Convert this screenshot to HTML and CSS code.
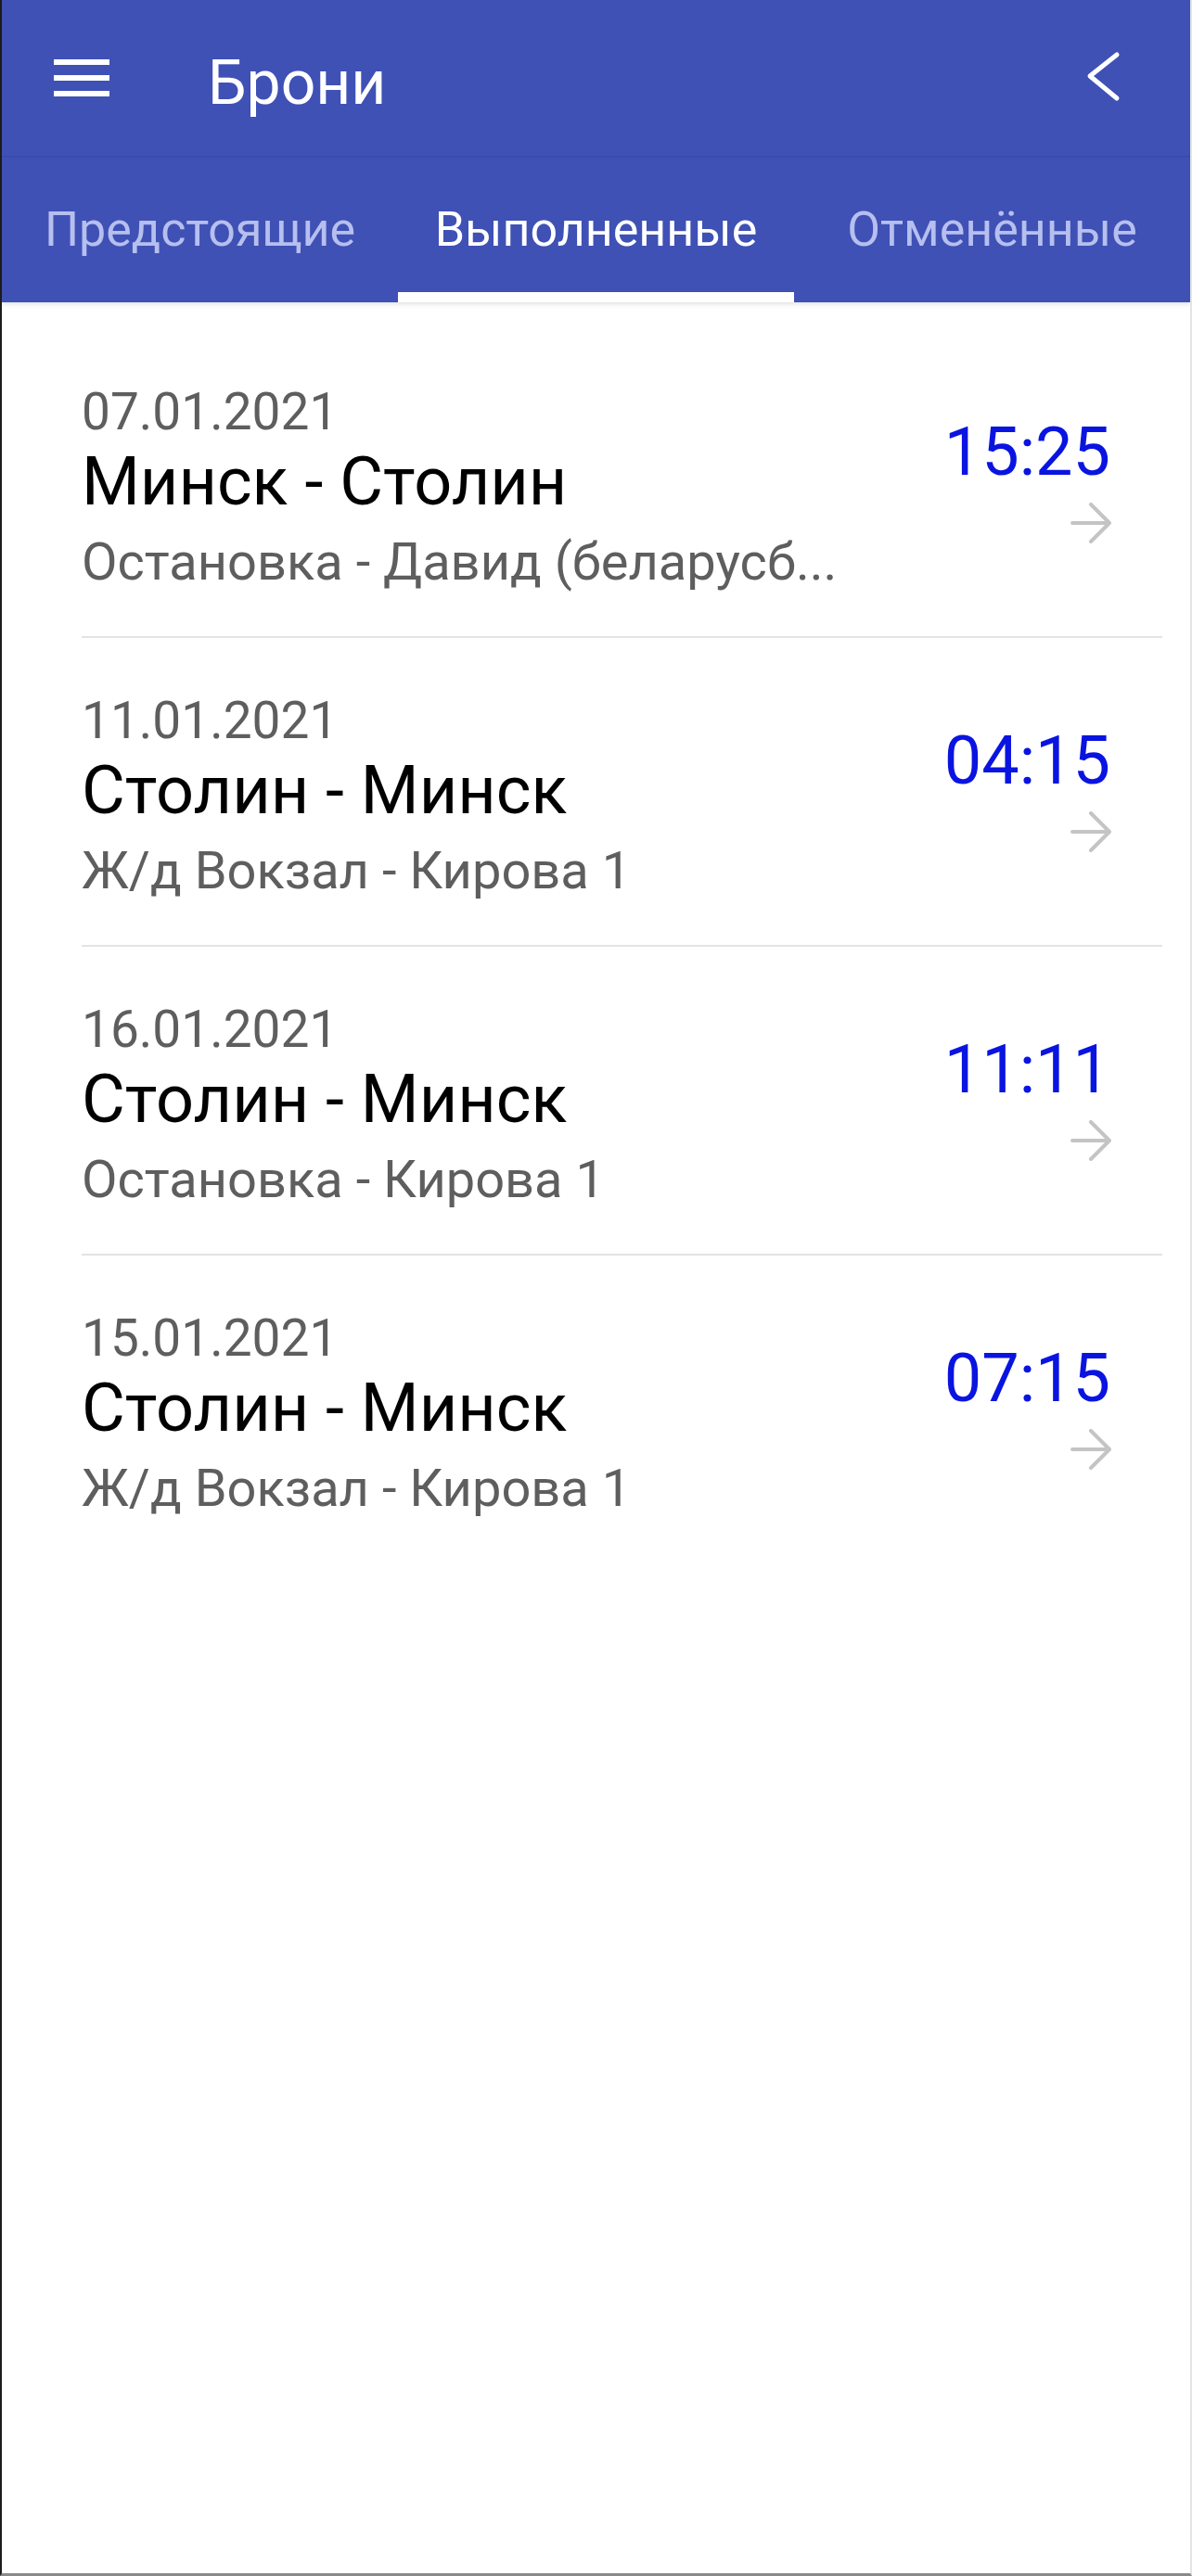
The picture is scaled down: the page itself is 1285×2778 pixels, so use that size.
FILE: index.html
```html
<!DOCTYPE html>
<html lang="ru">
<head>
<meta charset="utf-8">
<title>Брони</title>
<link rel="stylesheet" href="styles.css">
</head>
<body>
<div class="screen">
  <header class="appbar">
    <div class="toolbar">
      <svg class="menu-icon" width="60" height="40" viewBox="0 0 60 40" aria-hidden="true">
        <rect x="0" y="0" width="60" height="6" fill="#fff"/>
        <rect x="0" y="17" width="60" height="6" fill="#fff"/>
        <rect x="0" y="34" width="60" height="6" fill="#fff"/>
      </svg>
      <h1 class="title">Брони</h1>
      <svg class="back-icon" width="42" height="56" viewBox="0 0 42 56" aria-hidden="true">
        <polyline points="35,4 6,27 35,51" fill="none" stroke="#fff" stroke-width="5" stroke-linecap="round" stroke-linejoin="round"/>
      </svg>
    </div>
    <nav class="tabs">
      <div class="tab">Предстоящие</div>
      <div class="tab tab-active">Выполненные</div>
      <div class="tab">Отменённые</div>
    </nav>
  </header>

  <main class="list">
    <div class="item">
      <div class="info">
        <div class="date">07.01.2021</div>
        <div class="route">Минск - Столин</div>
        <div class="stops">Остановка - Давид (беларусб...</div>
      </div>
      <div class="side">
        <div class="time">15:25</div>
        <svg class="arrow" width="46" height="44" viewBox="0 0 46 44" aria-hidden="true">
          <path d="M2 22H42M22 2L42 22L22 42" fill="none" stroke="#c4c4c4" stroke-width="4" stroke-linecap="round" stroke-linejoin="round"/>
        </svg>
      </div>
    </div>
    <div class="item">
      <div class="info">
        <div class="date">11.01.2021</div>
        <div class="route">Столин - Минск</div>
        <div class="stops">Ж/д Вокзал - Кирова 1</div>
      </div>
      <div class="side">
        <div class="time">04:15</div>
        <svg class="arrow" width="46" height="44" viewBox="0 0 46 44" aria-hidden="true">
          <path d="M2 22H42M22 2L42 22L22 42" fill="none" stroke="#c4c4c4" stroke-width="4" stroke-linecap="round" stroke-linejoin="round"/>
        </svg>
      </div>
    </div>
    <div class="item">
      <div class="info">
        <div class="date">16.01.2021</div>
        <div class="route">Столин - Минск</div>
        <div class="stops">Остановка - Кирова 1</div>
      </div>
      <div class="side">
        <div class="time">11:11</div>
        <svg class="arrow" width="46" height="44" viewBox="0 0 46 44" aria-hidden="true">
          <path d="M2 22H42M22 2L42 22L22 42" fill="none" stroke="#c4c4c4" stroke-width="4" stroke-linecap="round" stroke-linejoin="round"/>
        </svg>
      </div>
    </div>
    <div class="item item-last">
      <div class="info">
        <div class="date">15.01.2021</div>
        <div class="route">Столин - Минск</div>
        <div class="stops">Ж/д Вокзал - Кирова 1</div>
      </div>
      <div class="side">
        <div class="time">07:15</div>
        <svg class="arrow" width="46" height="44" viewBox="0 0 46 44" aria-hidden="true">
          <path d="M2 22H42M22 2L42 22L22 42" fill="none" stroke="#c4c4c4" stroke-width="4" stroke-linecap="round" stroke-linejoin="round"/>
        </svg>
      </div>
    </div>
  </main>
</div>
</body>
</html>
```

FILE: styles.css
```css
* {
  box-sizing: border-box;
}

html, body {
  margin: 0;
  padding: 0;
  background: #ffffff;
}

body {
  font-family: Roboto, "Noto Sans", "Liberation Sans", sans-serif;
}

.screen {
  width: 1285px;
  height: 2778px;
  display: flex;
  flex-direction: column;
  border-left: 2px solid #1c1c1c;
  border-right: 2px solid #e4e4e4;
  border-bottom: 3px solid #8a8a8a;
  overflow: hidden;
}

.appbar {
  background: #3f51b5;
  box-shadow: 0 2px 5px rgba(0, 0, 0, 0.12);
  position: relative;
  z-index: 1;
}

.toolbar {
  height: 168px;
  display: flex;
  align-items: center;
  padding-left: 56px;
  padding-right: 72px;
}

.menu-icon {
  flex: none;
}

.title {
  flex: 1;
  margin: 10px 0 0 106px;
  font-size: 66px;
  font-weight: 400;
  line-height: 75px;
  color: #ffffff;
}

.back-icon {
  flex: none;
  margin-top: -2px;
}

.tabs {
  height: 158px;
  display: grid;
  grid-template-columns: 1fr 1fr 1fr;
  border-top: 2px solid #3b4cad;
}

.tab {
  display: flex;
  align-items: center;
  justify-content: center;
  padding-top: 10px;
  border-bottom: 11px solid transparent;
  font-size: 52px;
  line-height: 60px;
  color: #b7bfef;
}

.tab-active {
  color: #ffffff;
  border-bottom-color: #ffffff;
}

.list {
  padding-top: 29px;
}

.item {
  display: flex;
  justify-content: space-between;
  margin-left: 86px;
  margin-right: 30px;
  padding: 57px 56px 48px 0;
  border-bottom: 2px solid #e3e3e3;
}

.item-last {
  border-bottom: none;
}

.info {
  min-width: 0;
  flex: 1;
}

.date {
  font-size: 55px;
  line-height: 64px;
  color: #5e5e5e;
}

.route {
  font-size: 72px;
  line-height: 88px;
  color: #000000;
}

.stops {
  margin-top: 10px;
  font-size: 56px;
  line-height: 64px;
  color: #5e5e5e;
  white-space: nowrap;
}

.side {
  display: flex;
  flex-direction: column;
  align-items: flex-end;
}

.time {
  margin-top: 34px;
  font-size: 72px;
  line-height: 84px;
  color: #0a14e0;
}

.arrow {
  margin-top: 12px;
  margin-right: -3px;
}
```
